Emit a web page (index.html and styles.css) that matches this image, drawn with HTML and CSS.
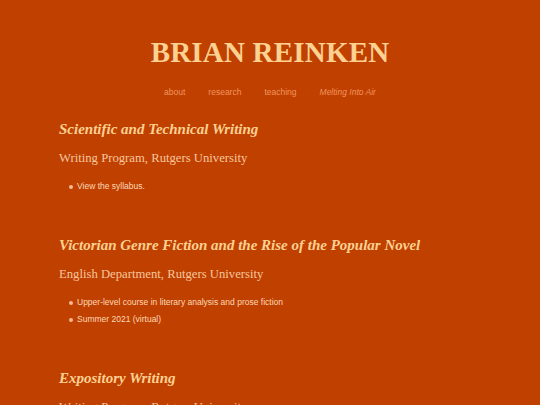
FILE: index.html
```html
<!DOCTYPE html>
<html lang="en">
<head>
<meta charset="utf-8">
<title>Brian Reinken - teaching</title>
<link rel="stylesheet" href="styles.css">
</head>
<body>
<header class="site-header">
  <h1 class="site-title">BRIAN REINKEN</h1>
  <nav class="site-nav">
    <a href="#">about</a>
    <a href="#">research</a>
    <a href="#">teaching</a>
    <a href="#" class="em">Melting Into Air</a>
  </nav>
</header>
<main class="content">
  <section class="course">
    <h2 class="course-title">Scientific and Technical Writing</h2>
    <p class="course-dept">Writing Program, Rutgers University</p>
    <ul class="course-notes">
      <li>View the syllabus.</li>
    </ul>
  </section>
  <section class="course">
    <h2 class="course-title">Victorian Genre Fiction and the Rise of the Popular Novel</h2>
    <p class="course-dept">English Department, Rutgers University</p>
    <ul class="course-notes">
      <li>Upper-level course in literary analysis and prose fiction</li>
      <li>Summer 2021 (virtual)</li>
    </ul>
  </section>
  <section class="course">
    <h2 class="course-title">Expository Writing</h2>
    <p class="course-dept">Writing Program, Rutgers University</p>
  </section>
</main>
</body>
</html>
```
FILE: styles.css
```css
html, body {
  margin: 0;
  padding: 0;
  background: #c04000;
}
body {
  font-family: "Liberation Serif", "Times New Roman", serif;
  color: #fcd08c;
}
.site-header {
  display: flex;
  flex-direction: column;
  align-items: center;
  padding-top: 35px;
}
.site-title {
  margin: 0;
  font-size: 29px;
  font-weight: bold;
  line-height: 34px;
  color: #fdd192;
  letter-spacing: 0.2px;
}
.site-nav {
  display: flex;
  gap: 23px;
  margin-top: 17px;
  font-family: "Liberation Sans", Arial, sans-serif;
  font-size: 8.5px;
  line-height: 12px;
}
.site-nav a {
  color: #f2945e;
  text-decoration: none;
}
.site-nav a.em {
  font-style: italic;
}
.content {
  padding: 21px 0 0 59px;
}
.course {
  margin-bottom: 40px;
}
.course-title {
  margin: 0;
  font-size: 15px;
  font-weight: bold;
  font-style: italic;
  line-height: 20px;
  color: #fdd192;
}
.course-dept {
  margin: 10px 0 0;
  font-size: 12.7px;
  line-height: 18px;
  color: #f6c69e;
}
.course-notes {
  list-style: none;
  margin: 11px 0 0;
  padding: 0 0 0 10px;
  font-family: "Liberation Sans", Arial, sans-serif;
  font-size: 8.5px;
  line-height: 17px;
  color: #fcd8b6;
}
.course-notes li {
  display: flex;
  align-items: center;
  gap: 4px;
}
.course-notes li::before {
  content: "";
  width: 4px;
  height: 4px;
  border-radius: 50%;
  background: #f8b890;
}
```
